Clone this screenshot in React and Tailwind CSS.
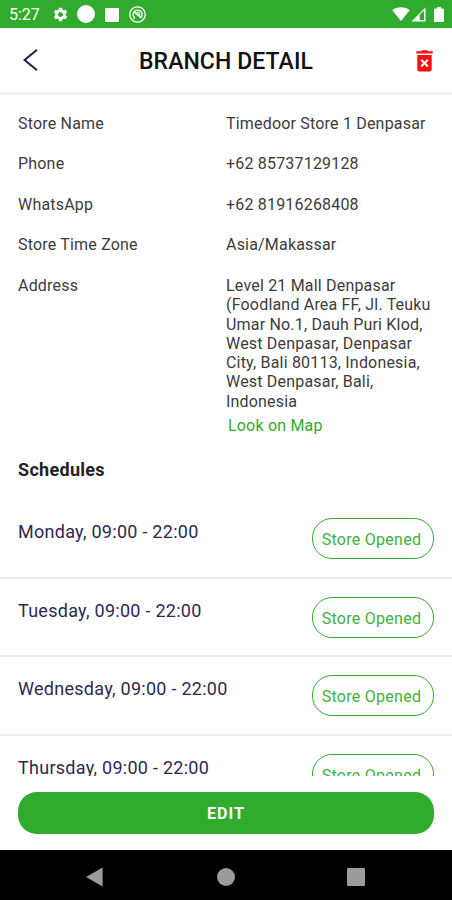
import { Fragment } from "react";
import { MdSettings } from "react-icons/md";

const details = [
  ["Store Name", "Timedoor Store 1 Denpasar"],
  ["Phone", "+62 85737129128"],
  ["WhatsApp", "+62 81916268408"],
  ["Store Time Zone", "Asia/Makassar"],
];

const address = [
  "Level 21 Mall Denpasar",
  "(Foodland Area FF, Jl. Teuku",
  "Umar No.1, Dauh Puri Klod,",
  "West Denpasar, Denpasar",
  "City, Bali 80113, Indonesia,",
  "West Denpasar, Bali,",
  "Indonesia",
];

const days = ["Monday", "Tuesday", "Wednesday", "Thursday"];

function StatusBar() {
  return (
    <div className="flex h-7 shrink-0 items-center bg-[#30ab2d] pl-[9px] pr-[8px] text-white">
      <span className="w-[43px] pt-[2px] text-[16px] leading-7">5:27</span>
      <MdSettings className="mt-px size-[17px]" />
      <span className="ml-[8px] size-[18px] rounded-full bg-white" />
      <span className="ml-[10px] mt-px size-[14px] rounded-[1px] bg-white" />
      <svg className="ml-[10px] size-[17px]" viewBox="0 0 17 17" fill="none" stroke="white">
        <circle cx="8.5" cy="8.5" r="7.7" strokeWidth="1.3" />
        <path d="M5.2 13.2V11.5A4.5 4.5 0 1 1 11.4 12.1" strokeWidth="1.3" />
        <path d="M5.2 5.6L12 11.6" strokeWidth="1.7" />
        <path d="M8 6.2A2.6 2.6 0 0 1 10.8 8.8" strokeWidth="1.2" />
      </svg>
      <svg className="ml-auto h-[14px] w-[18px]" viewBox="0 0 18 14" fill="white">
        <path d="M9 14L0.3 3.2C5.2-0.6 12.8-0.6 17.7 3.2Z" />
      </svg>
      <svg className="ml-[1px] mt-px h-[15px] w-[15px]" viewBox="0 0 15 15" fill="white">
        <path fillRule="evenodd" d="M0.5 14.5L14.5 0.5V14.5ZM8.7 7.8V13H13V3.8Z" />
      </svg>
      <svg className="ml-[8px] h-[15px] w-[10px]" viewBox="0 0 10 15" fill="white">
        <path d="M3 0H7V1.5H9Q10 1.5 10 2.5V14Q10 15 9 15H1Q0 15 0 14V2.5Q0 1.5 1 1.5H3Z" />
      </svg>
    </div>
  );
}

function Header() {
  return (
    <header className="grid h-[67px] shrink-0 grid-cols-[1fr_auto_1fr] items-center border-b-[3px] border-[#f3f3f3] pl-[23px] pr-[19px]">
      <svg className="size-[22px]" viewBox="0 0 22 22" fill="none" stroke="#1f1a4f" strokeWidth="2">
        <path d="M14 0.8L1.6 11L14 21.2" />
      </svg>
      <h1 className="-ml-[4px] mt-[4px] text-[23px] font-medium leading-7 tracking-[0.08px] text-[#111]">BRANCH DETAIL</h1>
      <svg className="ml-auto mt-px h-[22px] w-[17px]" viewBox="0 0 17 22">
        <path d="M0.3 1.2H4.8L5.8 0.2H11.2L12.2 1.2H16.7V3.4H0.3Z" fill="#f91010" />
        <path d="M1.3 5H15.7V19.3Q15.7 21.5 13.5 21.5H3.5Q1.3 21.5 1.3 19.3Z" fill="#f91010" />
        <path d="M5.2 9.8L11.8 16.4M11.8 9.8L5.2 16.4" stroke="white" strokeWidth="2.1" />
      </svg>
    </header>
  );
}

export default function App() {
  return (
    <div className="flex h-[900px] w-[452px] flex-col overflow-hidden bg-white font-['Roboto',sans-serif]">
      <StatusBar />
      <Header />
      <main className="h-[680.5px] shrink-0 overflow-hidden whitespace-nowrap pt-[18.6px]">
        <dl className="grid grid-cols-[208px_1fr] px-[18px] text-[16px] leading-[19.3px] tracking-[0.19px] text-[#3c3c3c]">
          {details.map(([label, value]) => (
            <Fragment key={label}>
              <dt className="h-[40.6px]">{label}</dt>
              <dd className="h-[40.6px]">{value}</dd>
            </Fragment>
          ))}
          <dt>Address</dt>
          <dd>
            {address.map((line) => (
              <div key={line}>{line}</div>
            ))}
            <a className="ml-[2px] mt-[5px] block text-[#30ab2d]">Look on Map</a>
          </dd>
        </dl>
        <h2 className="mt-[22.4px] px-[18px] text-[18px] font-bold leading-6 tracking-[0.3px] text-[#222]">Schedules</h2>
        <ul className="mt-[18px]">
          {days.map((day) => (
            <li key={day} className="flex h-[78.8px] items-start justify-between border-b-2 border-[#ebebeb] px-[18px] pt-[18px]">
              <span className="pt-[2px] text-[18px] leading-6 tracking-[0.27px] text-[#2d2950]">{day}, 09:00 - 22:00</span>
              <span className="flex h-[41px] w-[122px] items-center justify-center rounded-[20px] border border-[#30ab2d] pr-[3px] pt-[3px] text-[16px] tracking-[0.27px] text-[#3fb13c]">
                Store Opened
              </span>
            </li>
          ))}
        </ul>
      </main>
      <footer className="h-[74.5px] shrink-0 bg-white px-[18px] pt-[16.5px]">
        <button className="flex h-[41.5px] w-full items-center justify-center rounded-[19px] bg-[#30ab2d] pt-[2px] text-[16px] font-bold tracking-[1px] text-white">
          EDIT
        </button>
      </footer>
      <nav className="flex h-[50px] items-center bg-black pl-[86px] pt-[4px]">
        <svg className="h-[20px] w-[17px]" viewBox="0 0 17 20" fill="#9b9b9b">
          <path d="M0 10L16.6 0.4V19.6Z" />
        </svg>
        <span className="ml-[114px] size-[18px] rounded-full bg-[#9b9b9b]" />
        <span className="ml-[112px] size-[18px] rounded-[1px] bg-[#9b9b9b]" />
      </nav>
    </div>
  );
}
